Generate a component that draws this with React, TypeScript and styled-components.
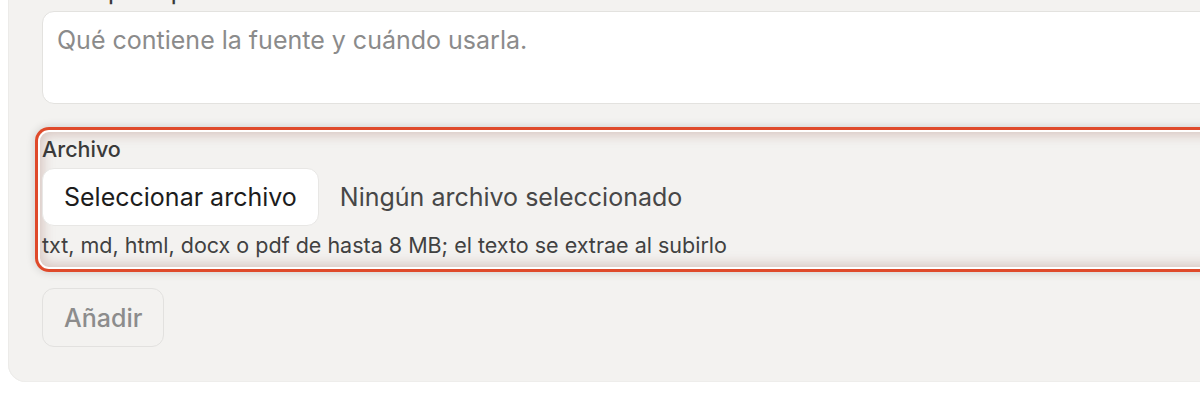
import styled, { createGlobalStyle } from "styled-components";

const GlobalStyle = createGlobalStyle`
  html, body {
    margin: 0;
    padding: 0;
    background: #ffffff;
    font-family: Inter, "Noto Sans", sans-serif;
  }
`;

const Page = styled.div`
  height: 400px;
  overflow: hidden;
  padding-left: 8px;
`;

const Panel = styled.section`
  margin-top: -40px;
  margin-right: -40px;
  padding: 19px 0 35px 34px;
  background: #f3f2f0;
  border-bottom-left-radius: 18px;
  box-shadow: inset 1px 0 0 #ecebe9, inset 0 -1px 0 #eeedeb;
  display: flex;
  flex-direction: column;
`;

const Field = styled.div<{ $highlight?: boolean }>`
  display: flex;
  flex-direction: column;
  gap: 6px;
  margin-bottom: 23px;

  ${(p) =>
    p.$highlight &&
    `
    margin-left: -7px;
    margin-bottom: 16px;
    padding: 6px 0 11px 4px;
    border: 3px solid #df4a2b;
    border-right: none;
    border-radius: 14px 0 0 14px;
    box-shadow:
      0 0 10px rgba(0, 0, 0, 0.16),
      inset 0 0 0 2px #ffffff,
      inset 0 0 12px 5px rgba(165, 110, 100, 0.34);
  `}
`;

const Label = styled.label`
  font-size: 21.5px;
  line-height: 26px;
  font-weight: 500;
  color: #3a3a3a;
`;

const TextArea = styled.textarea`
  height: 93px;
  box-sizing: border-box;
  padding: 13px 14px;
  border: 1px solid #e3e2df;
  border-radius: 12px;
  background: #ffffff;
  font-family: inherit;
  font-size: 25px;
  line-height: 30px;
  color: #222;
  resize: none;
  outline: none;

  &::placeholder {
    color: #8b8b8b;
  }
`;

const FileRow = styled.div`
  display: flex;
  align-items: center;
  gap: 21px;
`;

const FileButton = styled.button`
  height: 58px;
  padding: 0 21px;
  border: 1px solid #e8e7e5;
  border-radius: 12px;
  background: #ffffff;
  font-family: inherit;
  font-size: 25px;
  color: #1c1c1c;
  cursor: pointer;
`;

const FileName = styled.span`
  font-size: 25px;
  color: #474747;
`;

const Hint = styled.p`
  margin: 0;
  font-size: 21.5px;
  line-height: 26px;
  color: #414141;
`;

const AddButton = styled.button`
  align-self: flex-start;
  height: 59px;
  padding: 0 21px;
  border: 1px solid #e2e1df;
  border-radius: 12px;
  background: transparent;
  font-family: inherit;
  font-size: 25px;
  font-weight: 500;
  color: #8c8c8c;
`;

export default function App() {
  return (
    <Page>
      <GlobalStyle />
      <Panel>
        <Field>
          <Label>Descripción para el modelo</Label>
          <TextArea placeholder="Qué contiene la fuente y cuándo usarla." />
        </Field>
        <Field $highlight>
          <Label>Archivo</Label>
          <FileRow>
            <FileButton>Seleccionar archivo</FileButton>
            <FileName>Ningún archivo seleccionado</FileName>
          </FileRow>
          <Hint>txt, md, html, docx o pdf de hasta 8 MB; el texto se extrae al subirlo</Hint>
        </Field>
        <AddButton disabled>Añadir</AddButton>
      </Panel>
    </Page>
  );
}
